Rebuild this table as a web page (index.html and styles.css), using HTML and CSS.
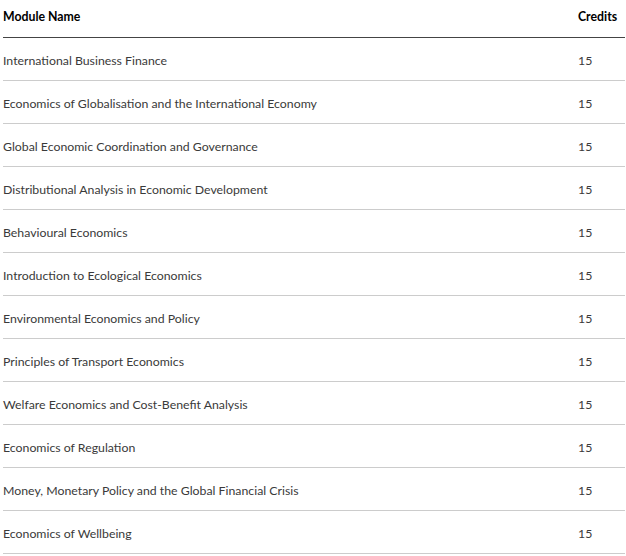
FILE: index.html
```html
<!DOCTYPE html>
<html>
<head>
<meta charset="utf-8">
<link rel="stylesheet" href="styles.css">
</head>
<body>
<table class="modules">
  <thead>
    <tr><th class="name">Module Name</th><th class="credits">Credits</th></tr>
  </thead>
  <tbody>
    <tr><td class="name">International Business Finance</td><td class="credits">15</td></tr>
    <tr><td class="name">Economics of Globalisation and the International Economy</td><td class="credits">15</td></tr>
    <tr><td class="name">Global Economic Coordination and Governance</td><td class="credits">15</td></tr>
    <tr><td class="name">Distributional Analysis in Economic Development</td><td class="credits">15</td></tr>
    <tr><td class="name">Behavioural Economics</td><td class="credits">15</td></tr>
    <tr><td class="name">Introduction to Ecological Economics</td><td class="credits">15</td></tr>
    <tr><td class="name">Environmental Economics and Policy</td><td class="credits">15</td></tr>
    <tr><td class="name">Principles of Transport Economics</td><td class="credits">15</td></tr>
    <tr><td class="name">Welfare Economics and Cost-Benefit Analysis</td><td class="credits">15</td></tr>
    <tr><td class="name">Economics of Regulation</td><td class="credits">15</td></tr>
    <tr><td class="name">Money, Monetary Policy and the Global Financial Crisis</td><td class="credits">15</td></tr>
    <tr><td class="name">Economics of Wellbeing</td><td class="credits">15</td></tr>
  </tbody>
</table>
</body>
</html>
```
FILE: styles.css
```css
html, body {
  margin: 0;
  padding: 0;
  background: #fff;
}
body {
  padding-left: 3px;
  font-family: Lato, "Liberation Sans", sans-serif;
  font-size: 12.3px;
  color: #3a3a3a;
}
.modules {
  width: 622px;
  border-collapse: collapse;
}
.modules th {
  text-align: left;
  font-weight: 700;
  color: #000;
  height: 33px;
  padding: 0 0 4px 0;
  border-bottom: 1px solid #444;
  vertical-align: middle;
}
.modules td {
  height: 39px;
  padding: 3px 0 0 0;
  border-bottom: 1px solid #ccc;
  vertical-align: middle;
}
.modules .credits {
  width: 47px;
  text-align: left;
}
```
